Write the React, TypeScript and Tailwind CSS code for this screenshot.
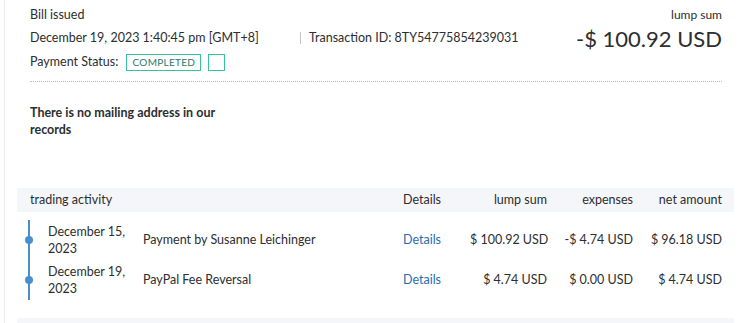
import React from "react";

type Actividad = {
  fecha: string;
  descripcion: string;
  bruto: string;
  comision: string;
  neto: string;
};

const actividades: Actividad[] = [
  {
    fecha: "December 15, 2023",
    descripcion: "Payment by Susanne Leichinger",
    bruto: "$ 100.92 USD",
    comision: "-$ 4.74 USD",
    neto: "$ 96.18 USD",
  },
  {
    fecha: "December 19, 2023",
    descripcion: "PayPal Fee Reversal",
    bruto: "$ 4.74 USD",
    comision: "$ 0.00 USD",
    neto: "$ 4.74 USD",
  },
];

export default function App() {
  return (
    <div className="min-h-[323px] w-[746px] overflow-hidden bg-white font-['Lato','Open_Sans',sans-serif] text-[12.5px] text-[#2c2e2f]">
      <div className="ml-[4px] min-h-[323px] border-l border-[#ececec]">
        {/* cabecera */}
        <div className="px-[25px] pr-[24px]">
          <div className="flex justify-between border-b border-dotted border-[#bdbdbd] pb-[10px]">
            <div>
              <div className="pt-[6px] leading-[18px]">Bill issued</div>
              <div className="mt-[5px] flex items-center leading-[18px]">
                <span className="w-[270px]">December 19, 2023 1:40:45 pm [GMT+8]</span>
                <span className="mr-[8px] h-[12px] w-[1px] bg-[#c4c4c4]" />
                <span>Transaction ID: 8TY54775854239031</span>
              </div>
              <div className="mt-[6px] flex items-center leading-[18px]">
                <span>Payment Status:</span>
                <span className="ml-[8px] flex h-[17px] w-[75px] items-center justify-center border border-[#37c299] text-[10px] tracking-[0.3px] text-[#2a7a68]">
                  COMPLETED
                </span>
                <span className="ml-[7px] h-[17px] w-[17px] border border-[#37c299]" />
              </div>
            </div>
            <div className="text-right">
              <div className="pt-[6px] text-[12px] leading-[18px]">lump sum</div>
              <div className="mt-[1px] text-[22px] leading-[28px]">-$ 100.92 USD</div>
            </div>
          </div>

          <p className="mt-[22px] w-[200px] font-bold leading-[17px]">
            There is no mailing address in our records
          </p>
        </div>

        {/* actividad */}
        <div className="mx-[12px] mt-[50px]">
          <div className="grid h-[24px] grid-cols-[373px_67px_77px_86px_89px] items-center bg-[#f5f6f9] pl-[13px] pr-[11px] leading-[18px]">
            <span>trading activity</span>
            <span>Details</span>
            <span className="text-right">lump sum</span>
            <span className="text-right">expenses</span>
            <span className="text-right">net amount</span>
          </div>

          <div className="ml-[11px] mt-[8px] border-l-2 border-[#4a8fc9]">
            {actividades.map((a) => (
              <div
                key={a.descripcion}
                className="relative grid h-[40px] grid-cols-[95px_260px_67px_77px_86px_89px] items-center whitespace-nowrap pl-[18px] pr-[11px]"
              >
                <span className="absolute left-[-5px] top-[16px] h-[8px] w-[8px] rounded-full bg-[#4a8fc9]" />
                <span className="whitespace-normal leading-[17px]">{a.fecha}</span>
                <span>{a.descripcion}</span>
                <span className="text-[#1f6db3]">Details</span>
                <span className="text-right">{a.bruto}</span>
                <span className="text-right">{a.comision}</span>
                <span className="text-right">{a.neto}</span>
              </div>
            ))}
          </div>

          <div className="mt-[18px] h-[10px] bg-[#f5f6f9]" />
        </div>
      </div>
    </div>
  );
}
